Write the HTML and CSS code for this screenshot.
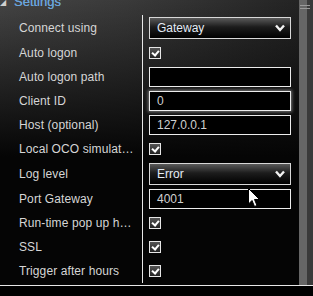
FILE: index.html
```html
<!DOCTYPE html>
<html lang="en">
<head>
    <meta charset="UTF-8">
    <title>Settings</title>
    <link rel="stylesheet" href="styles.css">
</head>
<body>
    <div class="window">
        <div class="panel">
            <div class="group-header">
                <span class="expander">&#9698;</span>
                <span class="group-title">Settings</span>
            </div>

            <div class="props">
                <div class="prop-row tall">
                    <div class="prop-name">Connect using</div>
                    <div class="prop-value">
                        <div class="combo">
                            <span>Gateway</span>
                            <svg class="chevron" width="10" height="8" viewBox="0 0 10 8"><polyline points="1,1.5 5,6 9,1.5" fill="none" stroke="#f2f2f2" stroke-width="2.4"/></svg>
                        </div>
                    </div>
                </div>
                <div class="prop-row">
                    <div class="prop-name">Auto logon</div>
                    <div class="prop-value"><span class="check"></span></div>
                </div>
                <div class="prop-row">
                    <div class="prop-name">Auto logon path</div>
                    <div class="prop-value"><div class="field"></div></div>
                </div>
                <div class="prop-row">
                    <div class="prop-name">Client ID</div>
                    <div class="prop-value"><div class="field focused">0</div></div>
                </div>
                <div class="prop-row">
                    <div class="prop-name">Host (optional)</div>
                    <div class="prop-value"><div class="field">127.0.0.1</div></div>
                </div>
                <div class="prop-row">
                    <div class="prop-name">Local OCO simulation</div>
                    <div class="prop-value"><span class="check"></span></div>
                </div>
                <div class="prop-row tall">
                    <div class="prop-name">Log level</div>
                    <div class="prop-value">
                        <div class="combo">
                            <span>Error</span>
                            <svg class="chevron" width="10" height="8" viewBox="0 0 10 8"><polyline points="1,1.5 5,6 9,1.5" fill="none" stroke="#f2f2f2" stroke-width="2.4"/></svg>
                        </div>
                    </div>
                </div>
                <div class="prop-row">
                    <div class="prop-name">Port Gateway</div>
                    <div class="prop-value"><div class="field">4001</div></div>
                </div>
                <div class="prop-row">
                    <div class="prop-name">Run-time pop up handling</div>
                    <div class="prop-value"><span class="check"></span></div>
                </div>
                <div class="prop-row">
                    <div class="prop-name">SSL</div>
                    <div class="prop-value"><span class="check"></span></div>
                </div>
                <div class="prop-row last">
                    <div class="prop-name">Trigger after hours</div>
                    <div class="prop-value"><span class="check"></span></div>
                </div>
            </div>
        </div>

        <div class="scrollbar">
            <div class="scroll-thumb">
                <span class="grip"></span>
                <span class="grip"></span>
            </div>
        </div>

        <svg class="cursor" width="13" height="20" viewBox="0 0 13 20">
            <path d="M0.5,0.5 L0.5,16 L4,12.5 L6.5,18.5 L9,17.5 L6.5,11.5 L11.5,11.5 Z" fill="#fff" stroke="#000" stroke-width="1"/>
        </svg>
    </div>
</body>
</html>
```

FILE: styles.css
```css
body {
    margin: 0;
    background: #000;
    font-family: 'Liberation Sans', Arial, sans-serif;
    font-size: 12px;
    color: #d6d6d6;
}

.window {
    position: relative;
    display: flex;
    width: 313px;
    height: 285px;
    border-bottom: 1px solid #e6e6e6;
    background:
        linear-gradient(180deg, rgba(0,0,0,0) 0%, #050505 55%, #050505 100%),
        linear-gradient(90deg, #444 0%, #3a3a3a 40%, #222 100%);
    overflow: hidden;
}

.panel {
    flex: 1;
    display: flex;
    flex-direction: column;
}

/* Group header, partly scrolled off */
.group-header {
    height: 14px;
    display: flex;
    align-items: flex-start;
    overflow: hidden;
}

.expander {
    width: 14px;
    margin-top: -4px;
    font-size: 8px;
    line-height: 14px;
    color: #cfcfcf;
}

.group-title {
    margin-top: -5px;
    line-height: 14px;
    font-size: 13px;
    color: #6aa4dc;
    text-shadow: 0 0 0.5px #6aa4dc;
}

/* Property grid */
.props {
    display: flex;
    flex-direction: column;
}

.prop-row {
    display: grid;
    grid-template-columns: 142px 1fr;
    height: 24px;
}

.prop-row.tall {
    height: 26px;
}

.prop-row:first-child {
    height: 27px;
    padding-top: 1px;
    box-sizing: border-box;
}

.prop-row.last {
    height: 26px;
    padding-bottom: 2px;
    box-sizing: border-box;
}

.prop-name {
    padding-left: 19px;
    padding-right: 7px;
    overflow: hidden;
    white-space: nowrap;
    text-overflow: ellipsis;
    line-height: 25px;
    letter-spacing: 0.1px;
}

.prop-row.tall .prop-name {
    line-height: 27px;
}

.prop-value {
    border-left: 1px solid #e8e8e8;
    padding-left: 6px;
    display: flex;
    align-items: center;
}

.field {
    width: 142px;
    height: 20px;
    box-sizing: border-box;
    border: 1px solid #ececec;
    background: #000;
    padding-left: 7px;
    line-height: 18px;
    color: #d0d0d0;
}

.field.focused {
    box-shadow: 0 0 3px 1px #777;
}

.combo {
    width: 142px;
    height: 22px;
    box-sizing: border-box;
    border: 1px solid #d8d8d8;
    background: linear-gradient(180deg, #5a5a5a 0%, #1c1c1c 45%, #000 100%);
    padding: 0 5px 0 7px;
    display: flex;
    align-items: center;
    justify-content: space-between;
    color: #e4ecf6;
}

.check {
    width: 12px;
    height: 12px;
    box-sizing: border-box;
    border: 1px solid #e6e6e6;
    background: linear-gradient(180deg, #555 0%, #222 100%);
    position: relative;
}

.check::after {
    content: '';
    position: absolute;
    left: 3px;
    top: 1px;
    width: 3px;
    height: 5px;
    border: solid #fff;
    border-width: 0 2px 2px 0;
    transform: rotate(40deg);
}

/* Scrollbar */
.scrollbar {
    width: 14px;
    display: flex;
    background: #444;
}

.scroll-thumb {
    width: 7px;
    background: #666;
    border-right: 6px solid #3a3a3a;
    display: flex;
    flex-direction: column;
    gap: 2px;
    padding-top: 5px;
    padding-left: 1px;
}

.grip {
    display: block;
    width: 10px;
    height: 1px;
    background: #9a9a9a;
}

.cursor {
    position: absolute;
    left: 248px;
    top: 188px;
}
```
